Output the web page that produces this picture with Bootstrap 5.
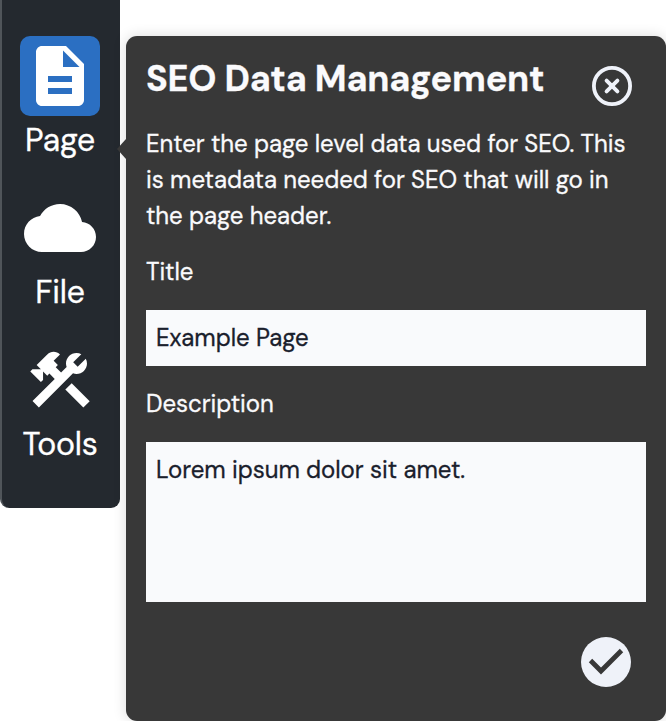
<!DOCTYPE html>
<html lang="en">
<head>
<meta charset="utf-8">
<meta name="viewport" content="width=device-width, initial-scale=1">
<title>SEO Data Management</title>
<link href="https://cdn.jsdelivr.net/npm/bootstrap@5.3.0/dist/css/bootstrap.min.css" rel="stylesheet">
<style>
body { font-family: "DM Sans", Inter, "Liberation Sans", sans-serif; background: #fff; height: 721px; overflow: hidden; -webkit-text-stroke: .3px; }
.side-menu { width: 120px; height: 508px; background: #24292f; border-left: 2px solid #50555a; border-radius: 0 0 9px 9px; padding-top: 36px; }
.side-item { width: 116px; height: 152px; color: #fff; }
.side-icon { width: 80px; height: 80px; border-radius: 10px; }
.side-icon.active { background: #2b6fc2; }
.side-icon svg { width: 72px; height: 72px; fill: #fff; }
.side-label { font-size: 32px; line-height: 48px; letter-spacing: -.2px; }
.seo-panel { width: 540px; height: 685px; margin: 36px 0 0 6px; padding: 20px; background: #383838; color: #fafafc; border-radius: 11px; box-shadow: 0 0 14px rgba(0,0,0,.14); font-size: 24px; line-height: 36px; letter-spacing: -.05px; }
.seo-panel::before { content: ""; position: absolute; left: -9px; top: 103px; border: solid transparent; border-width: 10px 9px 10px 0; border-right-color: #383838; }
.panel-title { font-size: 36px; line-height: 46px; font-weight: 700; letter-spacing: -.24px; }
.panel-intro { margin: 24px 0 20px; }
.field, .field:focus { border: 0; border-radius: 0; background: #f9fafc; color: #1a202c; font-size: 24px; line-height: 36px; padding: 10px; letter-spacing: -.04px; }
.field-label { margin-bottom: 20px; }
.field-title { height: 56px; margin-bottom: 20px; padding: 9px 10px 11px; }
.field-description { height: 160px; resize: none; }
.icon-btn { border: 0; padding: 0; line-height: 0; background: none; }
.close-btn { margin: 10px 14px -4px 0; }
.save-btn { margin: 35px 15px 0 0; }
</style>
<script src="https://cdn.jsdelivr.net/npm/bootstrap@5.3.0/dist/js/bootstrap.bundle.min.js"></script>
</head>
<body>
<div class="d-flex align-items-start">
  <nav class="side-menu flex-shrink-0">
    <div class="side-item d-flex flex-column align-items-center">
      <div class="side-icon active d-flex align-items-center justify-content-center"><svg viewBox="0 0 24 24"><path d="M14 2H6c-1.1 0-2 .9-2 2v16c0 1.1.9 2 2 2h12c1.1 0 2-.9 2-2V8l-6-6zm2 16H8v-2h8v2zm0-4H8v-2h8v2zm-3-5V3.5L18.5 9H13z"/></svg></div>
      <span class="side-label">Page</span>
    </div>
    <div class="side-item d-flex flex-column align-items-center">
      <div class="side-icon d-flex align-items-center justify-content-center"><svg viewBox="0 0 24 24"><path d="M19.35 10.04C18.67 6.59 15.64 4 12 4 9.11 4 6.6 5.64 5.35 8.04 2.34 8.36 0 10.91 0 14c0 3.31 2.69 6 6 6h13c2.76 0 5-2.24 5-5 0-2.64-2.05-4.78-4.65-4.96z"/></svg></div>
      <span class="side-label">File</span>
    </div>
    <div class="side-item d-flex flex-column align-items-center">
      <div class="side-icon d-flex align-items-center justify-content-center"><svg viewBox="0 0 24 24"><rect x="16.34" y="12.87" width="3" height="8.48" transform="rotate(-45 17.84 17.11)"/><path d="M17.5 10c1.93 0 3.5-1.57 3.5-3.5 0-.58-.16-1.12-.41-1.6l-2.7 2.7-1.49-1.49 2.7-2.7C18.62 3.16 18.08 3 17.5 3 15.57 3 14 4.57 14 6.5c0 .41.08.8.21 1.16l-1.85 1.85-1.78-1.78.71-.71-1.41-1.41L12 3.49c-1.17-1.17-3.07-1.17-4.24 0L4.22 7.03l1.41 1.41H2.81l-.71.71 3.54 3.54.71-.71V9.15l1.41 1.41.71-.71 1.78 1.78-7.41 7.41 2.12 2.12L16.34 9.79c.36.13.75.21 1.16.21z"/></svg></div>
      <span class="side-label">Tools</span>
    </div>
  </nav>
  <main class="seo-panel position-relative flex-shrink-0 d-flex flex-column">
    <div class="d-flex justify-content-between">
      <h1 class="panel-title text-nowrap mb-0">SEO Data Management</h1>
      <button class="icon-btn close-btn align-self-start" aria-label="Close"><svg width="40" height="40" viewBox="0 0 40 40" fill="none" stroke="#eff2f9"><circle cx="20" cy="20" r="18.1" stroke-width="3.8"/><path d="M14.6 14.6l10.8 10.8M25.4 14.6L14.6 25.4" stroke-width="3.9" stroke-linecap="round"/></svg></button>
    </div>
    <p class="panel-intro text-nowrap">Enter the page level data used for SEO. This<br>is metadata needed for SEO that will go in<br>the page header.</p>
    <label class="field-label" for="seo-title">Title</label>
    <input id="seo-title" class="form-control field field-title" value="Example Page">
    <label class="field-label" for="seo-desc">Description</label>
    <textarea id="seo-desc" class="form-control field field-description">Lorem ipsum dolor sit amet.</textarea>
    <button class="icon-btn save-btn align-self-end" aria-label="Save"><svg width="50" height="50" viewBox="0 0 50 50"><circle cx="25" cy="25" r="25" fill="#eff2f9"/><path d="M9.5 23.5L20 34 40.5 13.5" fill="none" stroke="#383838" stroke-width="4.8"/></svg></button>
  </main>
</div>
</body>
</html>
